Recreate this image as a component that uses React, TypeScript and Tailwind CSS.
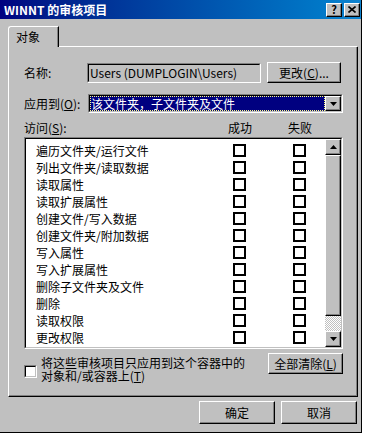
import React from "react";

const raised =
  "border border-t-white border-l-white border-r-black border-b-black shadow-[inset_-1px_-1px_#808080] bg-[#c0c0c0]";

const rows = [
  "遍历文件夹/运行文件",
  "列出文件夹/读取数据",
  "读取属性",
  "读取扩展属性",
  "创建文件/写入数据",
  "创建文件夹/附加数据",
  "写入属性",
  "写入扩展属性",
  "删除子文件夹及文件",
  "删除",
  "读取权限",
  "更改权限",
];

const Key = ({ k }: { k: string }) => (
  <>
    (<span className="underline underline-offset-[1px]">{k}</span>)
  </>
);

// two-line sunken frame, like the old 3D edit boxes
const Sunken: React.FC<{ className?: string; inner?: string; children?: React.ReactNode }> = ({
  className = "",
  inner = "",
  children,
}) => (
  <div className={`flex border border-t-[#808080] border-l-[#808080] border-r-white border-b-white ${className}`}>
    <div className={`flex flex-1 border border-t-black border-l-black border-r-[#c0c0c0] border-b-[#c0c0c0] ${inner}`}>
      {children}
    </div>
  </div>
);

const Arrow = ({ up }: { up?: boolean }) => (
  <svg width="7" height="4" viewBox="0 0 7 4">
    {up ? <path d="M3.5 0 L7 4 L0 4 Z" fill="#000" /> : <path d="M0 0 L7 0 L3.5 4 Z" fill="#000" />}
  </svg>
);

const Box = () => <div className="size-[13px] border-2 border-black bg-white" />;

export default function App() {
  return (
    <div className="flex h-[433px] w-[367px] bg-white font-['Noto_Sans_CJK_SC',sans-serif] text-[12px] leading-none text-black select-none">
      <div className="flex h-[433px] w-[362px] flex-col border-r border-b border-black bg-[#c0c0c0]">
        {/* Title bar */}
        <div className="flex h-[19px] items-center bg-linear-to-r from-[#000080] to-[#1084d0] pl-[4px] pr-[1px]">
          <span className="font-bold text-white">WINNT 的审核项目</span>
          <div className="ml-auto flex gap-[2px]">
            <div className={`flex h-[14px] w-[16px] items-center justify-center text-[11px] font-bold ${raised}`}>?</div>
            <div className={`flex h-[14px] w-[16px] items-center justify-center ${raised}`}>
              <svg width="8" height="7" viewBox="0 0 8 7">
                <path d="M0.5 0.5 L7.5 6.5 M7.5 0.5 L0.5 6.5" stroke="#000" strokeWidth="1.6" />
              </svg>
            </div>
          </div>
        </div>

        <div className="ml-[8px] mt-[7px] w-[350px]">
          {/* Tab strip */}
          <div className="flex h-[21px]">
            <div className="flex w-[51px] items-center rounded-tl-[3px] border-t border-l border-r border-t-white border-l-white border-r-black pl-[7px] shadow-[inset_-1px_0_#808080]">
              对象
            </div>
            <div className="mr-[1px] flex-1 border-b border-white" />
          </div>

          {/* Panel */}
          <div className="flex h-[350px] flex-col border-l border-r border-b border-l-white border-r-black border-b-black pl-[15px] pr-[14px] shadow-[inset_-1px_-1px_#808080]">
            <div className="mt-[15px] flex h-[21px] items-center">
              <span className="w-[63px]">名称:</span>
              <Sunken className="h-[20px] w-[174px]" inner="items-center pl-[1px]">
                <span>Users (DUMPLOGIN\Users)</span>
              </Sunken>
              <div className={`ml-[6px] flex h-[21px] w-[74px] items-center justify-center ${raised}`}>
                更改<Key k="C" />...
              </div>
            </div>

            <div className="mt-[11px] flex h-[19px] items-center">
              <span className="w-[64px]">
                应用到<Key k="O" />:
              </span>
              <Sunken className="h-[19px] flex-1 bg-white" inner="items-center">
                <div className="flex h-full flex-1 items-center bg-[#000080] pl-[1px] text-white outline outline-1 -outline-offset-1 outline-dotted outline-[#ffff80]">
                  该文件夹，子文件夹及文件
                </div>
                <div className={`flex h-full w-[16px] items-center justify-center ${raised}`}>
                  <Arrow />
                </div>
              </Sunken>
            </div>

            <div className="mt-[9px] flex h-[12px] items-center">
              <span className="w-[204px]">
                访问<Key k="S" />:
              </span>
              <span className="w-[60px]">成功</span>
              <span>失败</span>
            </div>

            {/* Access list */}
            <Sunken className="mt-[3px] h-[212px] bg-white">
              <div className="flex flex-1 flex-col pt-[3px] pl-[10px]">
                {rows.map((r) => (
                  <div key={r} className="flex h-[17px] items-center">
                    <span className="w-[197px]">{r}</span>
                    <Box />
                    <div className="ml-[47px]">
                      <Box />
                    </div>
                  </div>
                ))}
              </div>
              <div className="flex w-[16px] flex-col">
                <div className={`flex h-[16px] items-center justify-center ${raised}`}>
                  <Arrow up />
                </div>
                <div className={`h-[161px] ${raised}`} />
                <div className="h-[15px] bg-[repeating-conic-gradient(#c0c0c0_0%_25%,#ffffff_0%_50%)] bg-size-[2px_2px]" />
                <div className={`flex h-[16px] items-center justify-center ${raised}`}>
                  <Arrow />
                </div>
              </div>
            </Sunken>

            <div className="mt-[4px] flex items-start">
              <Sunken className="mt-[12px] size-[13px] bg-white" />
              <div className="ml-[4px] mt-[3px] flex w-[212px] flex-col">
                <div className="flex h-[13px] items-center">将这些审核项目只应用到这个容器中的</div>
                <div className="flex h-[13px] items-center">
                  对象和/或容器上<Key k="T" />
                </div>
              </div>
              <div className={`ml-auto flex h-[21px] w-[75px] items-center justify-center ${raised}`}>
                全部清除<Key k="L" />
              </div>
            </div>
          </div>
        </div>

        {/* Dialog buttons */}
        <div className="mt-[4px] flex justify-end gap-[6px] pr-[4px]">
          <div className={`flex h-[23px] w-[76px] items-center justify-center ${raised}`}>确定</div>
          <div className={`flex h-[23px] w-[76px] items-center justify-center ${raised}`}>取消</div>
        </div>
      </div>
    </div>
  );
}
